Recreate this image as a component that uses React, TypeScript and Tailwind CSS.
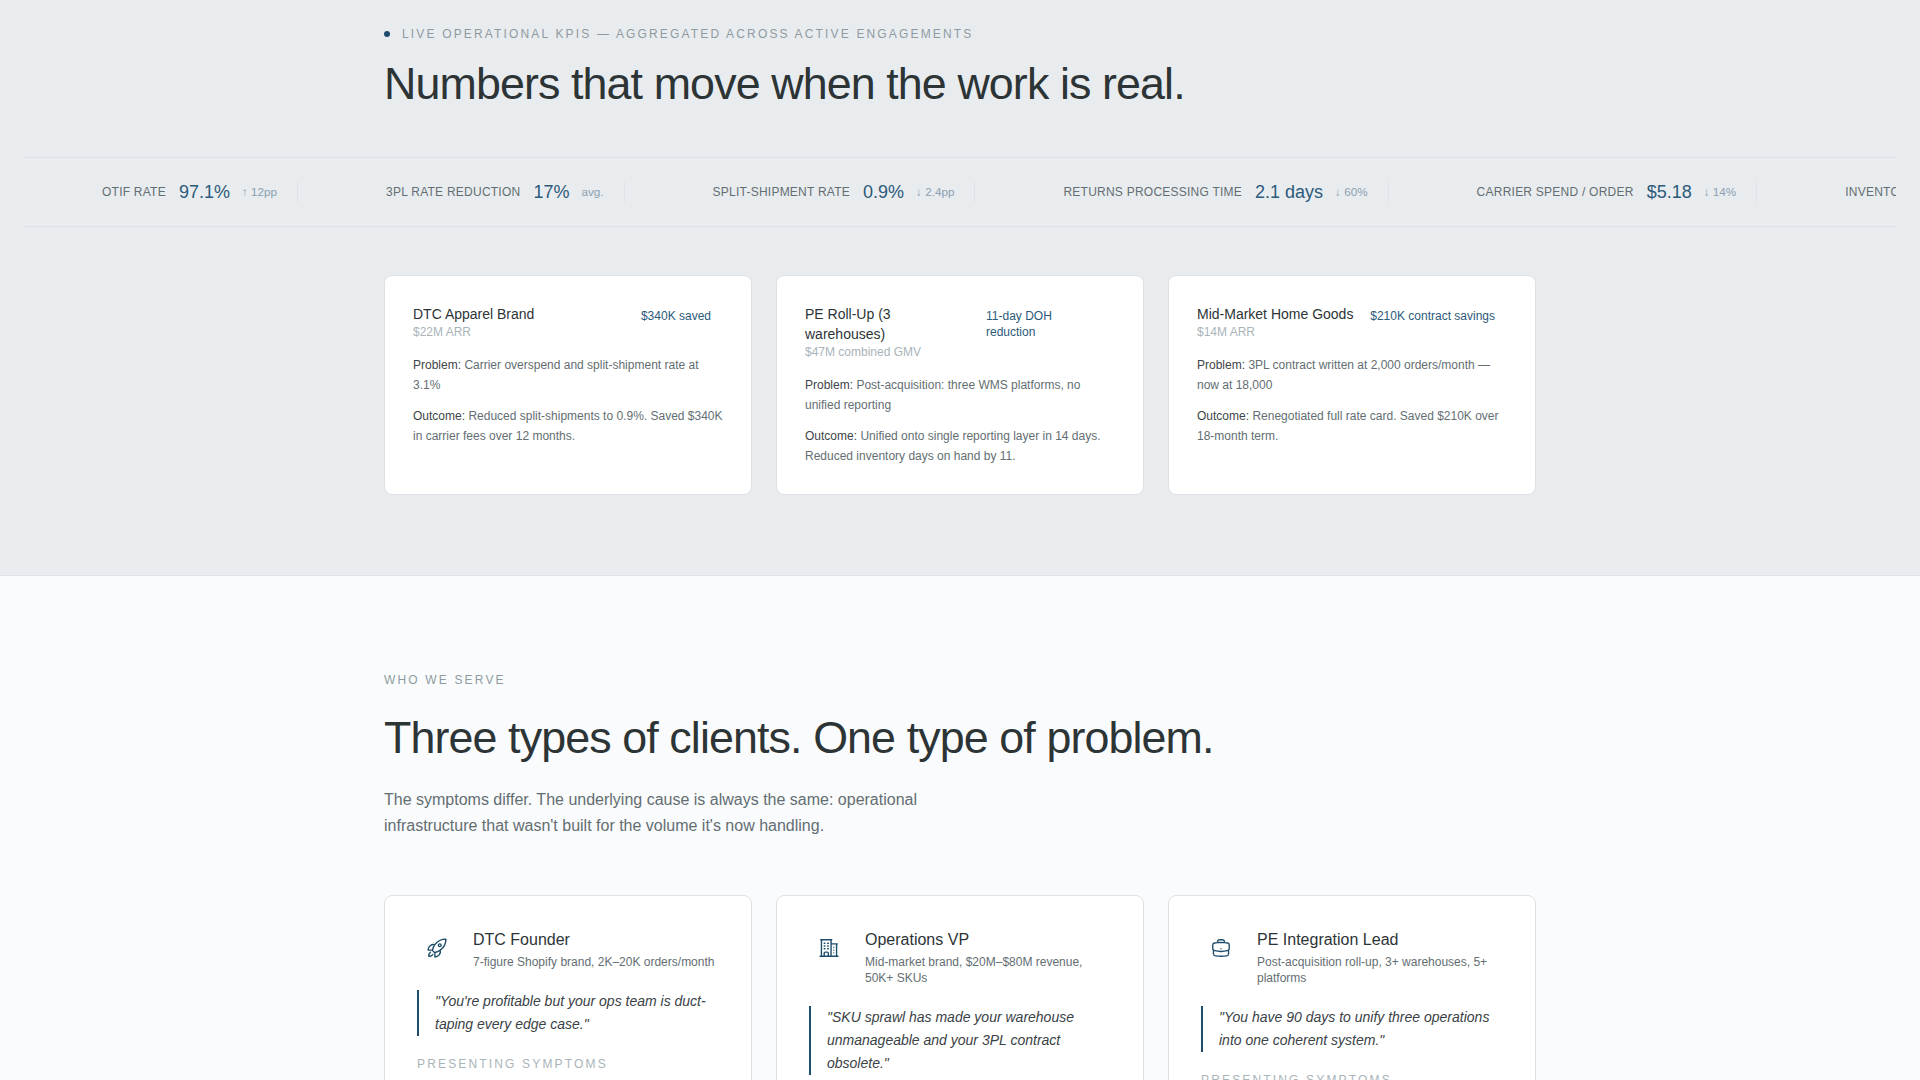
import React from "react";
import { HiOutlineRocketLaunch, HiOutlineBuildingOffice2, HiOutlineBriefcase } from "react-icons/hi2";

const ticker = [
  { l: "OTIF RATE", v: "97.1%", d: "↑ 12pp" },
  { l: "3PL RATE REDUCTION", v: "17%", d: "avg." },
  { l: "SPLIT-SHIPMENT RATE", v: "0.9%", d: "↓ 2.4pp" },
  { l: "RETURNS PROCESSING TIME", v: "2.1 days", d: "↓ 60%" },
  { l: "CARRIER SPEND / ORDER", v: "$5.18", d: "↓ 14%" },
  { l: "INVENTORY ACCURACY", v: "99.2%", d: "↑ 4pp" },
];

const cases = [
  { t: "DTC Apparel Brand", s: "$22M ARR", b: "$340K saved", w: "shrink-0", p: "Carrier overspend and split-shipment rate at 3.1%", o: "Reduced split-shipments to 0.9%. Saved $340K in carrier fees over 12 months." },
  { t: "PE Roll-Up (3 warehouses)", s: "$47M combined GMV", b: "11-day DOH reduction", w: "w-[141px] shrink-0", p: "Post-acquisition: three WMS platforms, no unified reporting", o: "Unified onto single reporting layer in 14 days. Reduced inventory days on hand by 11." },
  { t: "Mid-Market Home Goods", s: "$14M ARR", b: "$210K contract savings", w: "shrink-0", p: "3PL contract written at 2,000 orders/month — now at 18,000", o: "Renegotiated full rate card. Saved $210K over 18-month term." },
];

const clients = [
  { I: HiOutlineRocketLaunch, t: "DTC Founder", s: "7-figure Shopify brand, 2K–20K orders/month", q: "\"You're profitable but your ops team is duct-taping every edge case.\"" },
  { I: HiOutlineBuildingOffice2, t: "Operations VP", s: "Mid-market brand, $20M–$80M revenue, 50K+ SKUs", q: "\"SKU sprawl has made your warehouse unmanageable and your 3PL contract obsolete.\"" },
  { I: HiOutlineBriefcase, t: "PE Integration Lead", s: "Post-acquisition roll-up, 3+ warehouses, 5+ platforms", q: "\"You have 90 days to unify three operations into one coherent system.\"" },
];

export default function App() {
  return (
    <div className="h-[1080px] overflow-hidden bg-[#fafbfc] font-['Liberation_Sans',Arial,sans-serif] text-[#2d3436]">
      <section className="h-[576px] border-b border-[#dee2e6] bg-[#e9ecef] pt-[27px]">
        <div className="mx-auto w-[1152px]">
          <div className="flex items-center gap-[12px] text-[12px] leading-[14px] tracking-[0.18em] text-[#8f9ba1]">
            <span className="h-[6px] w-[6px] rounded-full bg-[#1e4d6b]" />
            <span>LIVE OPERATIONAL KPIS — AGGREGATED ACROSS ACTIVE ENGAGEMENTS</span>
          </div>
          <h2 className="mt-[14px] text-[44.8px] leading-[56px] font-normal tracking-[-0.02em] text-[#2d3436]">Numbers that move when the work is real.</h2>
        </div>
        <div className="mx-6 mt-[46px] flex h-[70px] items-center overflow-hidden border-y border-[#dee2e6] pl-[78px]">
          {ticker.map((x) => (
            <div key={x.l} className="flex shrink-0 items-center gap-3 whitespace-nowrap">
              <span className="mr-px text-[12px] tracking-[0.02em] text-[#636e72]">{x.l}</span>
              <span className="text-[18px] text-[#2c5a7a]">{x.v}</span>
              <span className="text-[11.7px] text-[#8aa0b0]">{x.d}</span>
              <span className="ml-[8px] mr-[88px] h-[20px] w-px bg-[#dee2e6]" />
            </div>
          ))}
        </div>
        <div className="mx-auto mt-[48px] grid w-[1152px] grid-cols-3 gap-6">
          {cases.map((c) => (
            <div key={c.t} className="h-[220px] rounded-[8px] border border-[#dee2e6] bg-white p-[28px]">
              <div className="flex items-start justify-between">
                <div className="min-w-0">
                  <div className="text-[14px] leading-[20px] text-[#2d3436]">{c.t}</div>
                  <div className="text-[12px] leading-[16px] text-[#a9b4b9]">{c.s}</div>
                </div>
                <div className={"mt-[4px] px-3 text-[12px] leading-[16px] text-[#2c5a7a] " + c.w}>{c.b}</div>
              </div>
              <p className="mt-[15px] text-[12px] leading-[20px] text-[#636e72]"><span className="font-medium text-[#3d4548]">Problem:</span> {c.p}</p>
              <p className="mt-[11px] text-[12px] leading-[20px] text-[#636e72]"><span className="font-medium text-[#3d4548]">Outcome:</span> {c.o}</p>
            </div>
          ))}
        </div>
      </section>
      <section className="pt-[96px]">
        <div className="mx-auto w-[1152px]">
          <div className="text-[12px] leading-[16px] tracking-[0.18em] text-[#8f9ba1]">WHO WE SERVE</div>
          <h2 className="mt-[21px] text-[44.8px] leading-[56px] font-normal tracking-[-0.02em] text-[#2d3436]">Three types of clients. One type of problem.</h2>
          <p className="mt-[22px] w-[560px] text-[16px] leading-[25.6px] text-[#636e72]">The symptoms differ. The underlying cause is always the same: operational infrastructure that wasn't built for the volume it's now handling.</p>
          <div className="mt-[57px] grid grid-cols-3 gap-6">
            {clients.map((c) => (
              <div key={c.t} className="rounded-[8px] border border-[#dee2e6] bg-white p-[32px]">
                <div className="flex items-start gap-[16px]">
                  <div className="flex h-[40px] w-[40px] shrink-0 items-center justify-center text-[#1e4d6b]">
                    <c.I className="h-[22px] w-[22px]" />
                  </div>
                  <div>
                    <div className="text-[16px] leading-[24px] text-[#2d3436]">{c.t}</div>
                    <div className="mt-[2px] text-[12px] leading-[16px] text-[#636e72]">{c.s}</div>
                  </div>
                </div>
                <blockquote className="mt-[20px] border-l-2 border-[#1e4d6b] pl-[16px] text-[14px] leading-[23px] italic text-[#3a4246]">{c.q}</blockquote>
                <div className="mt-[20px] text-[12px] leading-[16px] tracking-[0.18em] text-[#a9b4b9]">PRESENTING SYMPTOMS</div>
              </div>
            ))}
          </div>
        </div>
      </section>
    </div>
  );
}
